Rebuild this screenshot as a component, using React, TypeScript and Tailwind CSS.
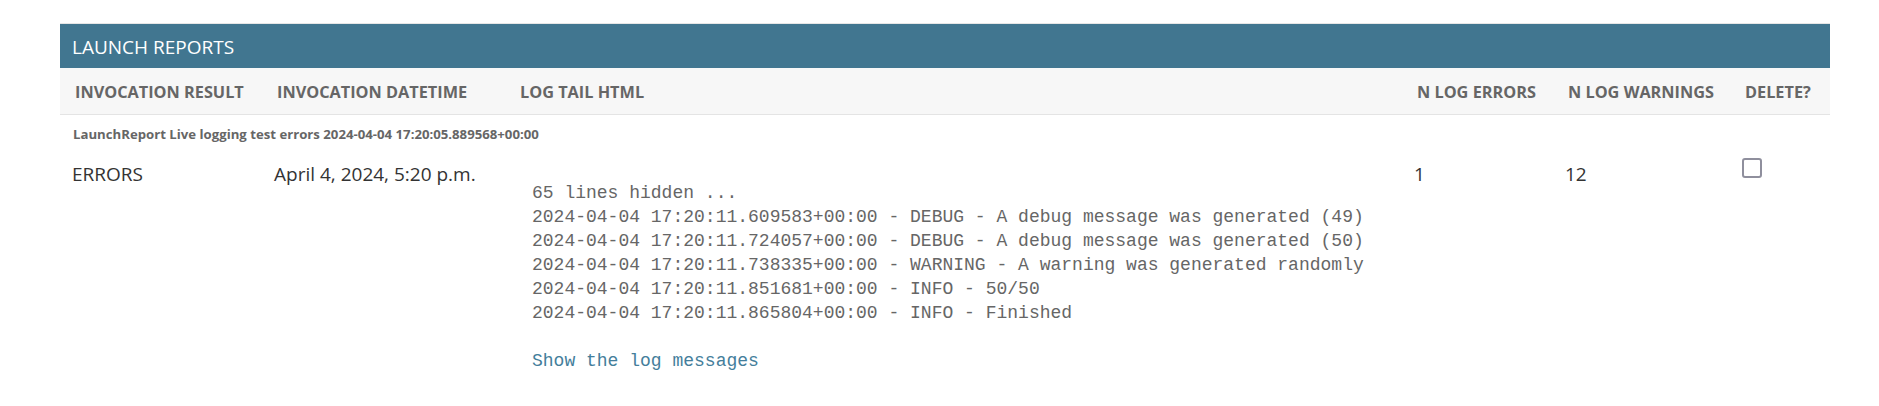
import type { ReactNode } from 'react'

type Column = { key: string; label: string; width: string }

const columns: Column[] = [
  { key: 'result', label: 'Invocation result', width: 'w-[202px]' },
  { key: 'datetime', label: 'Invocation datetime', width: 'w-[243px]' },
  { key: 'log', label: 'Log tail html', width: 'w-[897px]' },
  { key: 'errors', label: 'N log errors', width: 'w-[151px]' },
  { key: 'warnings', label: 'N log warnings', width: 'w-[177px]' },
  { key: 'delete', label: 'Delete?', width: 'w-[100px]' },
]

const logLines = [
  '65 lines hidden ...',
  '2024-04-04 17:20:11.609583+00:00 - DEBUG - A debug message was generated (49)',
  '2024-04-04 17:20:11.724057+00:00 - DEBUG - A debug message was generated (50)',
  '2024-04-04 17:20:11.738335+00:00 - WARNING - A warning was generated randomly',
  '2024-04-04 17:20:11.851681+00:00 - INFO - 50/50',
  '2024-04-04 17:20:11.865804+00:00 - INFO - Finished',
]

export default function App(): ReactNode {
  return (
    <div className="min-h-[406px] bg-white pt-[23px] pl-[60px] font-['Open_Sans','Noto_Sans',sans-serif]">
      <div className="w-[1770px] border-t border-[#e6e6e6]">
        <h2 className="flex h-[44px] items-center bg-[#417690] px-[12px] pt-[2px] text-[19px] font-normal uppercase text-white">Launch reports</h2>
        <table className="w-full table-fixed border-collapse">
          <thead>
            <tr className="h-[46px] border-b border-[#e4e4e4] bg-[#f7f7f7]">
              {columns.map((col) => (
                <th key={col.key} className={`${col.width} px-[15px] pt-[2px] text-left text-[16.3px] font-bold uppercase text-[#666]`}>{col.label}</th>
              ))}
            </tr>
          </thead>
          <tbody>
            <tr>
              <td colSpan={6} className="px-[13px] pt-[10px] text-[13.2px] font-bold text-[#666]">LaunchReport Live logging test errors 2024-04-04 17:20:05.889568+00:00</td>
            </tr>
            <tr className="text-[19px] leading-[24px] text-[#333]">
              <td className="px-[12px] pt-[18px] align-top">ERRORS</td>
              <td className="px-[12px] pt-[18px] align-top">April 4, 2024, 5:20 p.m.</td>
              <td className="px-[12px] pt-[18px] align-top">
                <pre className="mt-[19px] pl-[15px] font-['Liberation_Mono',monospace] text-[18px] leading-[24px] text-[#666]">
                  {logLines.join('\n')}
                  {'\n\n'}
                  <a href="#" className="text-[#447e9b]">Show the log messages</a>
                </pre>
              </td>
              <td className="px-[12px] pt-[18px] align-top">1</td>
              <td className="px-[12px] pt-[18px] align-top">12</td>
              <td className="px-[12px] pt-[14px] align-top">
                <input type="checkbox" className="block h-[20px] w-[20px] appearance-none rounded-[3px] border-2 border-[#8f8f9d] bg-white" />
              </td>
            </tr>
          </tbody>
        </table>
      </div>
    </div>
  )
}
